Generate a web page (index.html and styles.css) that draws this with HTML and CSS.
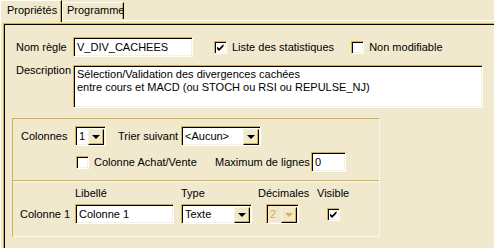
FILE: index.html
```html
<!DOCTYPE html>
<html lang="fr">
<head>
    <meta charset="UTF-8">
    <title>Propriétés</title>
    <link rel="stylesheet" href="styles.css">
</head>
<body>
    <div class="tabs">
        <div class="tab active">Propriétés</div>
        <div class="tab">Programme</div>
    </div>
    <div class="panel">
        <div class="frame">
            <div class="row row-name">
                <span class="lbl lbl-main">Nom règle</span>
                <div class="field name-field">V_DIV_CACHEES</div>
                <label class="check check-stats"><span class="box checked"></span>Liste des statistiques</label>
                <label class="check check-lock"><span class="box"></span>Non modifiable</label>
            </div>
            <div class="row row-desc">
                <span class="lbl lbl-main lbl-desc">Description</span>
                <div class="field desc-field">Sélection/Validation des divergences cachées<br>entre cours et MACD (ou STOCH ou RSI ou REPULSE_NJ)</div>
            </div>
            <div class="group">
                <div class="group-top">
                    <div class="row">
                        <span class="lbl lbl-cols">Colonnes</span>
                        <div class="combo combo-cols"><span class="val">1</span><span class="btn"></span></div>
                        <span class="lbl lbl-sort">Trier suivant</span>
                        <div class="combo combo-sort"><span class="val">&lt;Aucun&gt;</span><span class="btn"></span></div>
                    </div>
                    <div class="row row-opts">
                        <label class="check check-buy"><span class="box"></span>Colonne Achat/Vente</label>
                        <span class="lbl lbl-max">Maximum de lignes</span>
                        <div class="field max-field">0</div>
                    </div>
                </div>
                <div class="sep"></div>
                <div class="cols">
                    <span></span>
                    <span class="lbl">Libellé</span>
                    <span class="lbl">Type</span>
                    <span class="lbl">Décimales</span>
                    <span class="lbl">Visible</span>
                    <span class="lbl">Colonne 1</span>
                    <div class="field col-name">Colonne 1</div>
                    <div class="combo combo-type"><span class="val">Texte</span><span class="btn"></span></div>
                    <div class="combo combo-dec disabled"><span class="val">2</span><span class="btn"></span></div>
                    <span class="check check-visible"><span class="box checked"></span></span>
                </div>
            </div>
        </div>
    </div>
</body>
</html>
```

FILE: styles.css
```css
body {
    margin: 0;
    background: #f1e9cd;
    font-family: 'Liberation Sans', Arial, sans-serif;
    font-size: 11px;
    line-height: 13px;
    color: #000;
    overflow: hidden;
    height: 248px;
}
.tabs {
    display: flex;
    align-items: flex-start;
    height: 20px;
}
.tab {
    box-sizing: border-box;
    height: 17px;
    margin-top: 2px;
    padding: 1px 0 0 4px;
    width: 62px;
    border-top: 1px solid #fff;
    border-left: 1px solid #fff;
    border-right: 1px solid #000;
    box-shadow: inset -1px 0 0 #d6b04a;
    background: #f1e9cd;
}
.tab.active {
    position: relative;
    z-index: 1;
    height: 22px;
    margin-top: 0;
    padding: 3px 0 0 6px;
}
.panel {
    border-top: 1px solid #fff;
    border-left: 1px solid #fff;
    padding: 2px 0 0 2px;
}
.frame {
    height: 211px;
    border-top: 1px solid #d6b04a;
    border-left: 1px solid #d6b04a;
    box-shadow: inset 1px 1px 0 #000;
    padding: 13px 0 0 12px;
}
.row {
    display: flex;
    align-items: center;
}
.lbl {
    white-space: nowrap;
}
.lbl-main {
    width: 57px;
}
.field {
    box-sizing: border-box;
    height: 20px;
    background: #fff;
    border: 1px solid;
    border-color: #d6b04a #fff #fff #d6b04a;
    box-shadow: inset 1px 1px 0 #000, inset -1px -1px 0 #f6f1e0;
    padding: 3px 0 0 3px;
    white-space: nowrap;
}
.name-field {
    width: 120px;
}
.check {
    display: flex;
    align-items: center;
    gap: 5px;
}
.box {
    box-sizing: border-box;
    width: 13px;
    height: 13px;
    background: #fff;
    border: 1px solid;
    border-color: #d6b04a #fff #fff #d6b04a;
    box-shadow: inset 1px 1px 0 #000, inset -1px -1px 0 #f6f1e0;
}
.box.checked {
    background: #fff url("data:image/svg+xml,%3Csvg xmlns='http://www.w3.org/2000/svg' width='11' height='11'%3E%3Cpath d='M2 4.5 L4 6.5 L8.5 2 L8.5 4.5 L4 9 L2 7 Z' fill='%23000'/%3E%3C/svg%3E") center/11px 11px no-repeat;
}
.check-stats {
    margin-left: 21px;
}
.check-lock {
    margin-left: 17px;
}
.row-desc {
    align-items: flex-start;
    margin-top: 8px;
}
.lbl-desc {
    margin-top: -1px;
}
.desc-field {
    width: 410px;
    height: 43px;
    padding: 2px 0 0 3px;
}
.group {
    box-sizing: border-box;
    width: 368px;
    height: 119px;
    margin: 10px 0 0 -4px;
    border: 1px solid;
    border-color: #d6b04a #fbf7ea #fbf7ea #d6b04a;
}
.group-top {
    height: 54px;
    padding: 7px 0 0 8px;
}
.lbl-cols {
    width: 54px;
}
.combo {
    box-sizing: border-box;
    display: flex;
    height: 20px;
    background: #fff;
    border: 1px solid;
    border-color: #d6b04a #fff #fff #d6b04a;
    box-shadow: inset 1px 1px 0 #000, inset -1px -1px 0 #f6f1e0;
    padding: 2px 1px 1px 2px;
}
.combo .val {
    flex: 1;
    padding: 1px 0 0 1px;
    white-space: nowrap;
}
.combo .btn {
    box-sizing: border-box;
    width: 16px;
    height: 16px;
    background: #f1e9cd;
    border: 1px solid;
    border-color: #f6f1e0 #000 #000 #f6f1e0;
    box-shadow: inset -1px -1px 0 #d6b04a;
    display: flex;
    align-items: center;
    justify-content: center;
}
.combo .btn::after {
    content: '';
    border-left: 4px solid transparent;
    border-right: 4px solid transparent;
    border-top: 4px solid #000;
    margin: 0 0 1px 0;
}
.combo-cols {
    width: 31px;
}
.lbl-sort {
    margin-left: 12px;
    width: 63px;
}
.combo-sort {
    width: 80px;
}
.row-opts {
    margin-top: 6px;
}
.check-buy {
    margin-left: 55px;
    width: 139px;
}
.lbl-max {
    width: 96px;
}
.max-field {
    width: 35px;
}
.sep {
    border-top: 1px solid #d6b04a;
    border-bottom: 1px solid #fbf7ea;
}
.cols {
    display: grid;
    grid-template-columns: 55px 106px 77px 59px auto;
    grid-template-rows: 13px 20px;
    row-gap: 4px;
    align-items: center;
    padding: 5px 0 0 7px;
}
.col-name {
    width: 99px;
}
.combo-type {
    width: 71px;
}
.combo-dec {
    width: 33px;
    margin-left: 8px;
}
.combo.disabled {
    background: #f1e9cd;
    color: #d6b04a;
}
.combo.disabled .btn::after {
    border-top-color: #d6b04a;
}
.check-visible {
    margin-left: 10px;
}
```
